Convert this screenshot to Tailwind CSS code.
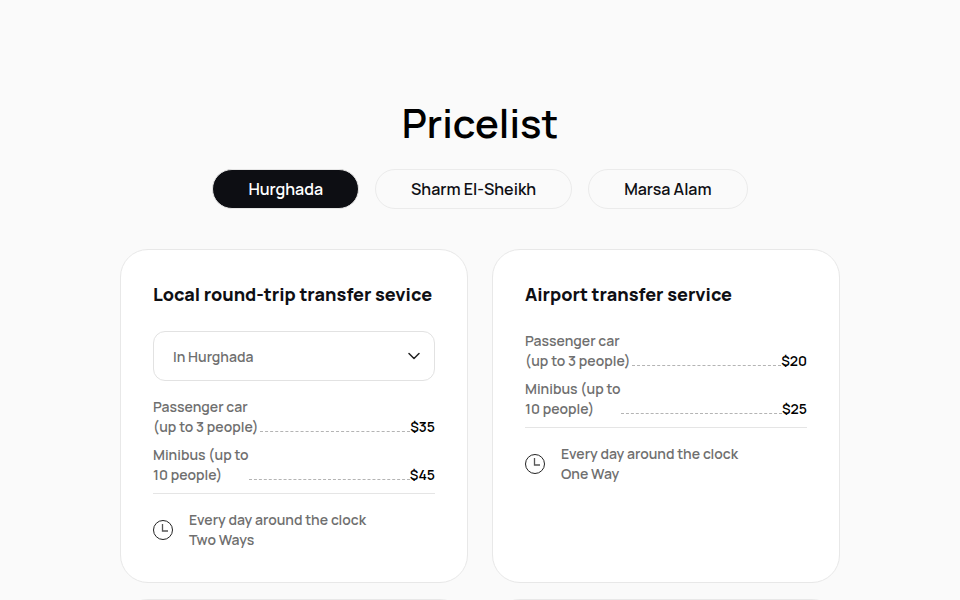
<!DOCTYPE html>
<html lang="en">

<head>
  <meta charset="UTF-8" />
  <meta name="viewport" content="width=device-width, initial-scale=1.0" />
  <title>Pricelist</title>
  <script src="https://cdn.jsdelivr.net/npm/@tailwindcss/browser@4"></script>
</head>

<body class="h-screen overflow-hidden bg-[#fafafa] font-['Manrope','Inter',sans-serif] text-[#0f0f14]">
  <main class="mx-auto max-w-[720px] pt-24">
    <h1 class="text-center text-[40px] leading-[54px] font-semibold text-black">Pricelist</h1>

    <!-- City tabs -->
    <div class="mt-[19px] flex justify-center gap-4">
      <button type="button" class="h-10 rounded-full border border-[#e5e5e5] bg-[#0d0e13] px-[35px] text-base font-semibold text-white">Hurghada</button>
      <button type="button" class="h-10 rounded-full border border-[#ebebeb] px-[35px] text-base font-semibold">Sharm El-Sheikh</button>
      <button type="button" class="h-10 rounded-full border border-[#ebebeb] px-[35px] text-base font-semibold">Marsa Alam</button>
    </div>

    <!-- Price cards -->
    <div class="mt-10 grid grid-cols-2 gap-x-6 gap-y-4">
      <section class="rounded-[28px] border border-[#e8e8e8] bg-white p-8">
        <h2 class="text-lg leading-6 font-extrabold whitespace-nowrap"><label for="route">Local round-trip transfer sevice</label></h2>
        <div class="relative mt-[25px]">
          <select id="route" class="h-[50px] w-full appearance-none rounded-xl border border-[#e2e2e2] bg-white px-[19px] pt-[2px] text-sm font-semibold text-[#6f6f6f]">
            <option>In Hurghada</option>
          </select>
          <svg class="pointer-events-none absolute top-[19px] right-[15px] h-3 w-3" viewBox="0 0 12 12" fill="none" stroke="#222" stroke-width="1.5" stroke-linecap="round" stroke-linejoin="round">
            <path d="M1 3.5L6 8.5L11 3.5" />
          </svg>
        </div>
        <ul class="mt-4 flex flex-col gap-2 border-b border-[#e5e5e5] pb-2 text-sm leading-5 font-semibold">
          <li class="flex items-end">
            <span class="text-[#6f6f6f]">Passenger car<br />(up to 3 people)</span>
            <span class="mb-[5px] ml-[2px] flex-1 border-b border-dashed border-[#b4b4b4]"></span>
            <span class="text-black">$35</span>
          </li>
          <li class="flex items-end">
            <span class="text-[#6f6f6f]">Minibus (up to<br />10 people)</span>
            <span class="mb-[5px] flex-1 border-b border-dashed border-[#b4b4b4]"></span>
            <span class="text-black">$45</span>
          </li>
        </ul>
        <div class="mt-4 flex items-center gap-4">
          <svg class="h-5 w-5 shrink-0" viewBox="0 0 20 20" fill="none">
            <circle cx="10" cy="10" r="9.5" stroke="#222" />
            <path d="M9.5 4V11H15" stroke="#555" stroke-width="1.3" />
          </svg>
          <p class="text-sm leading-5 font-semibold text-[#6f6f6f]">Every day around the clock<br />Two Ways</p>
        </div>
      </section>

      <section class="rounded-[28px] border border-[#e8e8e8] bg-white p-8">
        <h2 class="text-lg leading-6 font-extrabold whitespace-nowrap">Airport transfer service</h2>
        <ul class="mt-[25px] flex flex-col gap-2 border-b border-[#e5e5e5] pb-2 text-sm leading-5 font-semibold">
          <li class="flex items-end">
            <span class="text-[#6f6f6f]">Passenger car<br />(up to 3 people)</span>
            <span class="mb-[5px] ml-[2px] flex-1 border-b border-dashed border-[#b4b4b4]"></span>
            <span class="text-black">$20</span>
          </li>
          <li class="flex items-end">
            <span class="text-[#6f6f6f]">Minibus (up to<br />10 people)</span>
            <span class="mb-[5px] flex-1 border-b border-dashed border-[#b4b4b4]"></span>
            <span class="text-black">$25</span>
          </li>
        </ul>
        <div class="mt-4 flex items-center gap-4">
          <svg class="h-5 w-5 shrink-0" viewBox="0 0 20 20" fill="none">
            <circle cx="10" cy="10" r="9.5" stroke="#222" />
            <path d="M9.5 4V11H15" stroke="#555" stroke-width="1.3" />
          </svg>
          <p class="text-sm leading-5 font-semibold text-[#6f6f6f]">Every day around the clock<br />One Way</p>
        </div>
      </section>

      <section class="rounded-[28px] border border-[#e8e8e8] bg-white p-8"></section>
      <section class="rounded-[28px] border border-[#e8e8e8] bg-white p-8"></section>
    </div>
  </main>
</body>

</html>
